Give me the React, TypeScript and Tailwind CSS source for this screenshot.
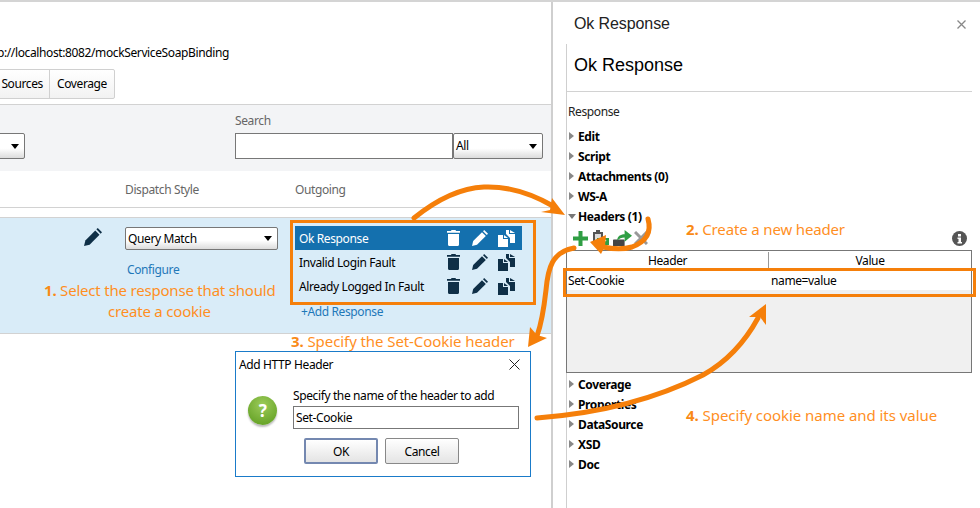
const ui = "font-['Noto_Sans',sans-serif] text-[12px] tracking-[-0.38px]";

function Trash({ color }: { color: string }) {
  return (
    <svg width="13" height="16" viewBox="0 0 13 16" fill={color}>
      <path d="M4 1 4.500 0h4L9 1h4v1.700H0V1zM1 4h11v10.500c0 .8-.6 1.500-1.400 1.500H2.400C1.600 16 1 15.300 1 14.500z" />
    </svg>
  );
}

function Pencil({ color, size = 16 }: { color: string; size?: number }) {
  return (
    <svg width={size} height={size} viewBox="0 0 16 16" fill={color}>
      <path d="M0 16l1.200-5L10 2.200l3.800 3.800L5 14.800z" />
      <path d="M11 1.200 12.200 0 16 3.800 14.800 5z" />
    </svg>
  );
}

function Copies({ color }: { color: string }) {
  return (
    <svg width="17" height="17" viewBox="0 0 17 17" fill={color}>
      <path d="M0 5h5v4h5v8H0z" />
      <path d="M6 5l4 3H6z" />
      <path d="M8 0h3v4h6v9h-5V8L8 4z" />
      <path d="M12 0l5 3h-5z" />
    </svg>
  );
}

function DropArrow() {
  return <span className="h-0 w-0 border-x-[4px] border-t-[5px] border-x-transparent border-t-black" />;
}

function Select({ label, className }: { label?: string; className: string }) {
  return (
    <div className={`flex items-center justify-between rounded-[2px] border border-[#777] bg-gradient-to-b from-white from-60% to-[#dcdcdc] pl-[2px] pr-[5px] text-black ${className}`}>
      <span>{label}</span>
      <DropArrow />
    </div>
  );
}

function ResponseRow({ name, active }: { name: string; active?: boolean }) {
  const color = active ? "#ffffff" : "#0f2f47";
  return (
    <div className={`flex h-[24px] w-[227px] items-center pl-[4px] ${active ? "bg-[#1470ae] text-white" : "text-black"}`}>
      <span className="w-[148px] pt-[1px]">{name}</span>
      <Trash color={color} />
      <span className="ml-[12px] flex w-[16px]"><Pencil color={color} /></span>
      <span className="ml-[10px] flex"><Copies color={color} /></span>
    </div>
  );
}

function Section({ title, open }: { title: string; open?: boolean }) {
  return (
    <div className="flex h-[20px] items-center pl-[1px]">
      {open ? (
        <span className="mr-[2px] h-0 w-0 border-x-[4px] border-t-[5px] border-x-transparent border-t-[#777]" />
      ) : (
        <span className="ml-[1px] mr-[4px] h-0 w-0 border-y-[4px] border-l-[5px] border-y-transparent border-l-[#888]" />
      )}
      <span className="pt-[1px] font-bold text-black">{title}</span>
    </div>
  );
}

function Note({ n, text, className }: { n: string; text: string; className: string }) {
  return (
    <div className={`absolute whitespace-nowrap font-['Noto_Sans',sans-serif] text-[15px] leading-[21px] text-[#ff8f1f] ${className}`}>
      <b className="text-[#f98a16]">{n}</b> {text}
    </div>
  );
}

export default function App() {
  return (
    <div className={`relative flex h-[508px] w-[980px] overflow-hidden border-t-2 border-[#d4d4d4] bg-white ${ui}`}>
      {/* left: mock service */}
      <div className="h-full w-[553px] shrink-0 border-r-[2px] border-[#cfcfcf]">
        <div className="ml-[-18px] mt-[42px] h-[18px] text-black">http://localhost:8082/mockServiceSoapBinding</div>
        <div className="ml-[-10px] mt-[7px] flex h-[30px] w-[125px] rounded-r-[2px] border border-[#d0d0d0] bg-gradient-to-b from-white to-[#f2f2f2] text-black">
          <div className="flex w-[59px] items-center justify-end border-r border-[#d0d0d0] pr-[6px]">Sources</div>
          <div className="flex flex-1 items-center justify-center">Coverage</div>
        </div>
        <div className="mt-[5px] h-[67px] border-t border-[#d2d2d2] bg-[#f3f4f6] pt-[7px]">
          <div className="ml-[235px] h-[21px] text-[#666]">Search</div>
          <div className="flex h-[26px] items-stretch">
            <Select className="ml-[-30px] w-[55px]" />
            <div className="ml-[210px] w-[218px] border border-[#777] bg-white" />
            <Select label="All" className="w-[90px]" />
          </div>
        </div>
        <div className="flex h-[37px] items-center border-b border-[#d2d2d2] pt-[2px] text-[#666]">
          <span className="ml-[125px] w-[170px]">Dispatch Style</span>
          <span>Outgoing</span>
        </div>
        <div className="mt-[9px] flex h-[117px] border-y border-[#d2d2d2] bg-[#d9ecf8]">
          <div className="ml-[84px] mt-[10px] w-[41px]"><Pencil color="#0f2f47" size={18} /></div>
          <div className="w-[170px]">
            <Select label="Query Match" className="mt-[9px] h-[23px] w-[153px]" />
            <div className="mt-[11px] pl-[2px] text-[#1f78b8]">Configure</div>
          </div>
          <div className="pt-[8px]">
            <ResponseRow name="Ok Response" active />
            <ResponseRow name="Invalid Login Fault" />
            <ResponseRow name="Already Logged In Fault" />
            <div className="mt-[5px] pl-[6px] text-[#1f78b8]">+Add Response</div>
          </div>
        </div>
      </div>

      {/* right: response drawer */}
      <div className="flex-1">
        <div className="ml-[21px] mr-[14px] flex h-[42px] items-center justify-between pt-[2px] font-['Liberation_Sans',sans-serif] text-[16px] tracking-[-0.1px] text-[#222]">
          <span>Ok Response</span>
          <svg width="9" height="9" viewBox="0 0 9 9" stroke="#888" strokeWidth="1.300"><path d="M.5.5l8 8M8.500.5l-8 8" /></svg>
        </div>
        <div className="ml-[13px] h-[464px] border-l-[1px] border-[#cfcfcf]">
          <div className="mr-[8px] flex h-[48px] items-center border-b border-[#d2d2d2] pb-[4px] pl-[7px] font-['Liberation_Sans',sans-serif] text-[18px] tracking-normal text-black">Ok Response</div>
          <div className="flex h-[34px] items-center pl-[1px] pt-[6px] text-[#222]">Response</div>
          <Section title="Edit" />
          <Section title="Script" />
          <Section title="Attachments (0)" />
          <Section title="WS-A" />
          <Section title="Headers (1)" open />
          <div className="mr-[8px] flex h-[24px] items-center pl-[6px]">
            <svg width="15" height="15" viewBox="0 0 15 15" fill="#2f9e44"><path d="M5.500 0h4v5.500H15v4H9.500V15h-4V9.500H0v-4h5.500z" /></svg>
            <svg width="17" height="16" viewBox="0 0 17 16" className="ml-[4px]">
              <path d="M1 2h3V0h4v2h3v13H1z" fill="#555" />
              <path d="M3 4h6v9H3z" fill="#ddd" />
              <path d="M5 8h12v7H5z" fill="#2f9e44" />
              <path d="m8 11 2 2 4-3" fill="none" stroke="#fff" strokeWidth="1.500" />
            </svg>
            <svg width="19" height="17" viewBox="0 0 18 16" className="ml-[4px]">
              <path d="M0 10c0-.6.4-1 1-1h9c.6 0 1 .4 1 1v5H0z" fill="#444" />
              <path d="M4 10c0-4 3-6 7-6V0l7 5.500-7 5.500V7c-3 0-5 1-7 3z" fill="#2f9e44" />
            </svg>
            <svg width="14" height="14" viewBox="0 0 14 14" stroke="#999" strokeWidth="3" className="ml-[2px]"><path d="M1 1l12 12M13 1 1 13" /></svg>
            <svg width="15" height="15" viewBox="0 0 15 15" className="ml-auto mr-[5px]">
              <circle cx="7.500" cy="7.500" r="7.500" fill="#555" />
              <path d="M6 3h3v2.500H6zM5.500 6.500H9V11h1v1.500H5.500V11h1V8h-1z" fill="#fff" />
            </svg>
          </div>
          <div className="ml-[-1px] mr-[8px] h-[123px] border border-[#777] bg-[#f0f0f0]">
            <div className="flex h-[19px] items-center bg-white pt-[1px] text-black">
              <span className="w-[202px] border-r border-[#999] text-center">Header</span>
              <span className="flex-1 text-center">Value</span>
            </div>
            <div className="flex h-[20px] items-center bg-white pt-[1px] text-black">
              <span className="w-[203px] pl-[1px]">Set-Cookie</span>
              <span className="pl-[1px]">name=value</span>
            </div>
          </div>
          <div className="mt-[1px]">
            <Section title="Coverage" />
            <Section title="Properties" />
            <Section title="DataSource" />
            <Section title="XSD" />
            <Section title="Doc" />
          </div>
        </div>
      </div>

      {/* dialog over the page */}
      <div className="absolute left-[235px] top-[349px] h-[126px] w-[296px] border border-[#1a7bc9] bg-white text-black">
        <div className="flex h-[25px] items-center justify-between pl-[3px] pr-[10px]">
          <span>Add HTTP Header</span>
          <svg width="11" height="11" viewBox="0 0 11 11" stroke="#222" strokeWidth="1"><path d="M.5.5l10 10M10.500.5l-10 10" /></svg>
        </div>
        <div className="flex pl-[12px] pt-[10px]">
          <div className="mt-[9px] flex h-[29px] w-[29px] items-center justify-center rounded-full bg-[radial-gradient(circle_at_50%_30%,#9ccb5a,#5a9a1c)] text-[17px] font-bold text-white shadow-[0_2px_2px_#bbb]">?</div>
          <div className="ml-[16px]">
            <div className="h-[19px]">Specify the name of the header to add</div>
            <div className="flex h-[23px] w-[226px] items-center border border-[#777] pl-[2px]">Set-Cookie</div>
            <div className="ml-[11px] mt-[9px] flex gap-[7px]">
              <div className="flex h-[26px] w-[74px] items-center justify-center rounded-[2px] border-2 border-[#7488b0] bg-gradient-to-b from-white to-[#e4e4e4] pt-[1px]">OK</div>
              <div className="flex h-[26px] w-[74px] items-center justify-center rounded-[2px] border border-[#888] bg-gradient-to-b from-white to-[#e4e4e4] pt-[1px]">Cancel</div>
            </div>
          </div>
        </div>
      </div>

      {/* annotation boxes */}
      <div className="absolute left-[290px] top-[218px] h-[85px] w-[246px] border-[3px] border-[#f57f0a]" />
      <div className="absolute left-[563px] top-[266px] h-[29px] w-[413px] border-[3px] border-[#f57f0a]" />

      <Note n="1." text="Select the response that should" className="left-[44px] top-[278px] tracking-[-0.2px]" />
      <Note n="" text="create a cookie" className="left-[108px] top-[299px] tracking-[-0.2px]" />
      <Note n="2." text="Create a new header" className="left-[686px] top-[217px] tracking-[-0.15px]" />
      <Note n="3." text="Specify the Set-Cookie header" className="left-[291px] top-[329px] tracking-[-0.08px]" />
      <Note n="4." text="Specify cookie name and its value" className="left-[686px] top-[403px] tracking-[-0.05px]" />

      {/* arrows */}
      <svg className="pointer-events-none absolute left-0 top-[-2px]" width="980" height="508" viewBox="0 0 980 508">
        <g fill="none" stroke="#f57f0a" strokeWidth="5" strokeLinecap="round">
          <path d="M414 218C440 197 462 188 484 187 508 186 532 194 553 206" />
          <path d="M648 219C652 233 645 242 632 247 622 250 612 249 603 247" />
          <path d="M574 248C552 252 548 268 546 290 544 308 542 322 537 336" />
          <path d="M537 418C590 414 650 402 703 375 730 360 746 340 758 318" />
        </g>
        <g fill="#f57f0a">
          <path d="m565 215-24-3 9-2 2-12z" />
          <path d="m590 242 16-7-1 11-4 8z" />
          <path d="m528 347 2-20 7 8 10 3z" />
          <path d="m766 304 0 21-6-8-11 0z" />
        </g>
      </svg>
    </div>
  );
}
